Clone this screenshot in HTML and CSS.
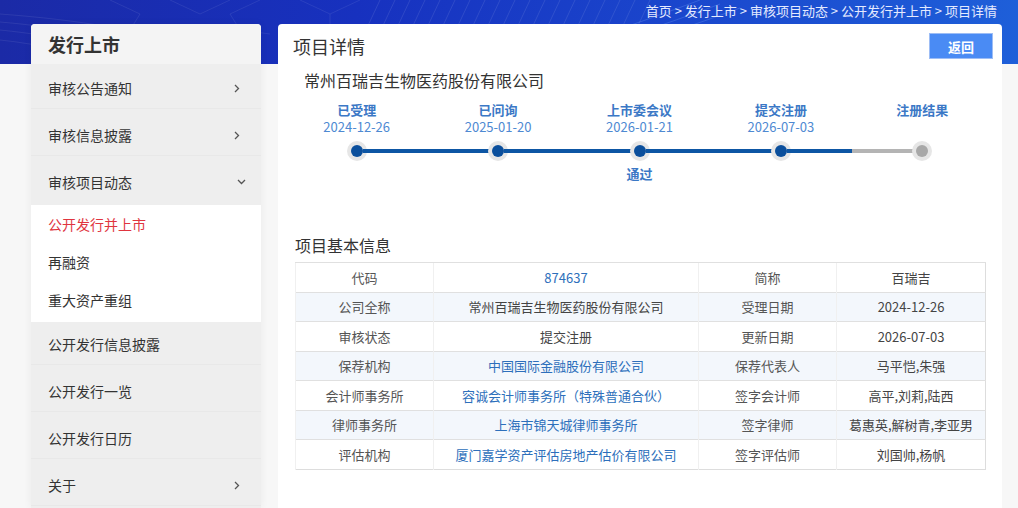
FILE: index.html
```html
<!DOCTYPE html>
<html>
  <head>
    <meta charset="UTF-8" />
    <title>项目详情</title>
    <link rel="stylesheet" href="styles.css">
  </head>
  <body>
    <header class="banner">
      <svg class="banner-art" width="1018" height="64" viewBox="0 0 1018 64">
        <g fill="none" stroke="#ffffff" stroke-opacity="0.08">
          <path d="M0 14 C 80 20, 140 30, 220 52" />
          <path d="M0 22 C 70 28, 130 40, 190 64" />
          <path d="M0 30 C 60 36, 110 48, 150 64" />
          <path d="M0 40 C 40 44, 80 54, 110 64" />
          <path d="M110 0 L140 14 L130 30 L100 34" />
          <path d="M170 0 L200 14 L230 0" />
          <path d="M230 14 L260 0 M230 14 L240 30 L270 34" />
          <path d="M300 0 L330 14 L360 0 M330 14 L330 30" />
        </g>
        <g stroke="#ffffff" stroke-opacity="0.1">
          <path d="M350 64 L380 0 M365 64 L395 0 M380 64 L410 0 M395 64 L425 0 M410 64 L440 0 M425 64 L455 0 M440 64 L470 0 M455 64 L485 0 M470 64 L500 0 M485 64 L515 0 M500 64 L530 0 M515 64 L545 0 M530 64 L560 0 M545 64 L575 0 M560 64 L590 0 M575 64 L605 0 M590 64 L620 0 M605 64 L635 0 M620 64 L650 0" />
        </g>
        <g fill="none" stroke="#7fb0ff" stroke-opacity="0.25">
          <path d="M500 64 C 560 50, 620 30, 700 0" />
          <path d="M520 64 C 580 52, 640 34, 720 4" />
          <path d="M540 64 C 600 54, 660 38, 740 8" />
        </g>
      </svg>
      <nav class="crumbs">首页 &gt; 发行上市 &gt; 审核项目动态 &gt; 公开发行并上市 &gt; 项目详情</nav>
    </header>

    <div class="layout">
      <aside class="sidebar">
        <h2 class="side-title">发行上市</h2>
        <ul class="nav">
          <li class="nav-item">
            <a class="nav-link">审核公告通知
              <svg class="chev" width="6" height="9" viewBox="0 0 6 9"><path d="M1 1 L4.5 4.5 L1 8" /></svg>
            </a>
          </li>
          <li class="nav-item">
            <a class="nav-link">审核信息披露
              <svg class="chev" width="6" height="9" viewBox="0 0 6 9"><path d="M1 1 L4.5 4.5 L1 8" /></svg>
            </a>
          </li>
          <li class="nav-item open">
            <a class="nav-link">审核项目动态
              <svg class="chev-down" width="9" height="6" viewBox="0 0 9 6"><path d="M1 1 L4.5 4.5 L8 1" /></svg>
            </a>
            <ul class="subnav">
              <li class="sub-item active">公开发行并上市</li>
              <li class="sub-item">再融资</li>
              <li class="sub-item">重大资产重组</li>
            </ul>
          </li>
          <li class="nav-item"><a class="nav-link">公开发行信息披露</a></li>
          <li class="nav-item"><a class="nav-link">公开发行一览</a></li>
          <li class="nav-item"><a class="nav-link">公开发行日历</a></li>
          <li class="nav-item">
            <a class="nav-link">关于
              <svg class="chev" width="6" height="9" viewBox="0 0 6 9"><path d="M1 1 L4.5 4.5 L1 8" /></svg>
            </a>
          </li>
        </ul>
      </aside>

      <main class="panel">
        <div class="panel-head">
          <h1 class="panel-title">项目详情</h1>
          <button class="back-btn">返回</button>
        </div>
        <div class="company">常州百瑞吉生物医药股份有限公司</div>

        <ol class="steps">
          <li class="step">
            <div class="step-name">已受理</div>
            <div class="step-date">2024-12-26</div>
            <div class="track"><span class="bar none"></span><span class="dot"></span><span class="bar"></span></div>
            <div class="step-note"></div>
          </li>
          <li class="step">
            <div class="step-name">已问询</div>
            <div class="step-date">2025-01-20</div>
            <div class="track"><span class="bar"></span><span class="dot"></span><span class="bar"></span></div>
            <div class="step-note"></div>
          </li>
          <li class="step">
            <div class="step-name">上市委会议</div>
            <div class="step-date">2026-01-21</div>
            <div class="track"><span class="bar"></span><span class="dot"></span><span class="bar"></span></div>
            <div class="step-note">通过</div>
          </li>
          <li class="step">
            <div class="step-name">提交注册</div>
            <div class="step-date">2026-07-03</div>
            <div class="track"><span class="bar"></span><span class="dot"></span><span class="bar"></span></div>
            <div class="step-note"></div>
          </li>
          <li class="step todo">
            <div class="step-name">注册结果</div>
            <div class="step-date"></div>
            <div class="track"><span class="bar"></span><span class="dot"></span><span class="bar none"></span></div>
            <div class="step-note"></div>
          </li>
        </ol>

        <h3 class="section-title">项目基本信息</h3>
        <table class="info">
          <colgroup>
            <col style="width: 138px" />
            <col style="width: 265px" />
            <col style="width: 138px" />
            <col style="width: 149px" />
          </colgroup>
          <tr>
            <td class="lbl">代码</td><td><a class="link">874637</a></td>
            <td class="lbl">简称</td><td>百瑞吉</td>
          </tr>
          <tr>
            <td class="lbl">公司全称</td><td>常州百瑞吉生物医药股份有限公司</td>
            <td class="lbl">受理日期</td><td>2024-12-26</td>
          </tr>
          <tr>
            <td class="lbl">审核状态</td><td>提交注册</td>
            <td class="lbl">更新日期</td><td>2026-07-03</td>
          </tr>
          <tr>
            <td class="lbl">保荐机构</td><td><a class="link">中国国际金融股份有限公司</a></td>
            <td class="lbl">保荐代表人</td><td>马平恺,朱强</td>
          </tr>
          <tr>
            <td class="lbl">会计师事务所</td><td><a class="link">容诚会计师事务所（特殊普通合伙）</a></td>
            <td class="lbl">签字会计师</td><td>高平,刘莉,陆西</td>
          </tr>
          <tr>
            <td class="lbl">律师事务所</td><td><a class="link">上海市锦天城律师事务所</a></td>
            <td class="lbl">签字律师</td><td>葛惠英,解树青,李亚男</td>
          </tr>
          <tr>
            <td class="lbl">评估机构</td><td><a class="link">厦门嘉学资产评估房地产估价有限公司</a></td>
            <td class="lbl">签字评估师</td><td>刘国帅,杨帆</td>
          </tr>
        </table>
      </main>
    </div>
  </body>
</html>
```

FILE: styles.css
```css
/* Page */
body {
  margin: 0;
  background-color: #f7f7f7;
  font-family: "Noto Sans CJK SC", "Noto Sans", sans-serif;
  color: #333;
  overflow: hidden;
}

/* Blue banner with breadcrumb */
.banner {
  position: relative;
  height: 64px;
  background: linear-gradient(90deg, #1b2aa6 0%, #1731bf 35%, #1a45cc 65%, #1e5fd9 100%);
  overflow: hidden;
}
.banner-art {
  position: absolute;
  top: 0;
  left: 0;
}
.crumbs {
  position: relative;
  text-align: right;
  padding: 2px 21px 0 0;
  font-size: 13px;
  line-height: 18px;
  color: #e4eaff;
}

.layout {
  display: flex;
  align-items: flex-start;
  gap: 17px;
  margin-top: -40px;
  padding-left: 31px;
  position: relative;
}

/* Sidebar menu */
.sidebar {
  width: 230px;
  flex: none;
  background-color: #eeeeee;
  border-radius: 4px 4px 0 0;
  box-shadow: 0 0 8px rgba(0, 0, 0, 0.06);
}
.side-title {
  margin: 0;
  height: 40px;
  line-height: 40px;
  padding-left: 17px;
  font-size: 18px;
  font-weight: bold;
  color: #333;
  background-color: #f4f4f4;
  border-radius: 4px 4px 0 0;
}
.nav {
  list-style: none;
  margin: 0;
  padding: 0;
}
.nav-item {
  padding-top: 4px;
}
.open + .nav-item {
  padding-top: 2px;
}
.nav-link {
  display: flex;
  align-items: center;
  justify-content: space-between;
  height: 40px;
  padding: 0 20px 0 17px;
  font-size: 14px;
  color: #333;
  border-bottom: 1px solid #e8e8e8;
  margin-bottom: 2px;
}
.chev path,
.chev-down path {
  fill: none;
  stroke: #555;
  stroke-width: 1.3;
}
.chev {
  margin-right: 1px;
}
.chev-down {
  margin-right: -5px;
}
.open .nav-link {
  border-bottom: none;
  margin-bottom: 3px;
}
.subnav {
  list-style: none;
  margin: 0;
  padding: 0 0 3px;
  background-color: #fff;
}
.sub-item {
  height: 38px;
  line-height: 38px;
  padding-left: 17px;
  font-size: 14px;
  color: #333;
}
.sub-item.active {
  color: #e0353f;
}

/* Detail panel */
.panel {
  width: 724px;
  height: 500px;
  background-color: #fff;
  border-radius: 4px 4px 0 0;
}
.panel-head {
  display: flex;
  align-items: center;
  justify-content: space-between;
  padding: 9px 9px 0 15px;
}
.panel-title {
  margin: 0;
  font-size: 18px;
  font-weight: normal;
  color: #333;
}
.back-btn {
  width: 64px;
  height: 26px;
  border: 1px solid #9dbdf5;
  background-color: #4a8bf4;
  color: #fff;
  font-family: inherit;
  font-size: 13px;
  font-weight: bold;
}
.company {
  margin-top: 9px;
  padding-left: 26px;
  font-size: 16px;
  line-height: 24px;
  color: #333;
}

/* Progress steps */
.steps {
  list-style: none;
  display: grid;
  grid-template-columns: repeat(5, 1fr);
  margin: 10px 9px 0 8px;
  padding: 0;
  text-align: center;
}
.step-name {
  height: 16px;
  font-size: 13px;
  line-height: 16px;
  font-weight: bold;
  color: #3b78c6;
}
.step-date {
  height: 16px;
  margin-top: 1px;
  font-size: 13px;
  line-height: 16px;
  color: #4e89d2;
}
.track {
  display: flex;
  align-items: center;
  height: 22px;
  margin-top: 5px;
}
.bar {
  flex: 1;
  height: 4px;
  background-color: #0d56a4;
}
.bar.none {
  background-color: transparent;
}
.dot {
  width: 12px;
  height: 12px;
  border-radius: 50%;
  background-color: #0b4f9c;
  box-shadow: 0 0 0 4px #e6e6e6;
}
.todo .bar {
  background-color: #b4b4b4;
}
.todo .bar.none {
  background-color: transparent;
}
.todo .dot {
  background-color: #a8a8a8;
}
.step-note {
  margin-top: 4px;
  height: 16px;
  font-size: 13px;
  line-height: 16px;
  font-weight: bold;
  color: #3b78c6;
}

/* Info table */
.section-title {
  margin: 52px 0 0 17px;
  font-size: 16px;
  line-height: 22px;
  font-weight: normal;
  color: #333;
}
.info {
  width: 690px;
  margin: 6px 0 0 17px;
  border-collapse: collapse;
  table-layout: fixed;
  font-size: 13px;
  border: 1px solid #dddddd;
}
.info tr {
  height: 29.5px;
}
.info tr:nth-child(even) {
  background-color: #f3f7fc;
}
.info td {
  padding: 0;
  text-align: center;
  color: #444;
  border-top: 1px solid #e0e0e0;
  border-left: 1px solid #f0f0f0;
}
.info td.lbl {
  color: #555;
}
.link {
  color: #2d6fbb;
}
```
